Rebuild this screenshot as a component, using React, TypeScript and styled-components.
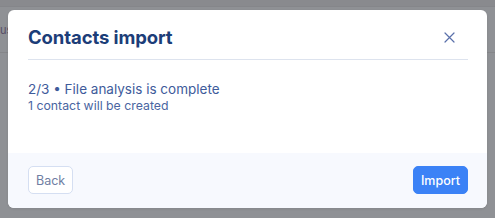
import styled, { createGlobalStyle } from "styled-components";

const GlobalStyle = createGlobalStyle`
  * { box-sizing: border-box; }
  html, body { margin: 0; padding: 0; }
  body {
    font-family: Inter, "Noto Sans", "Liberation Sans", sans-serif;
    background: #8f9195;
    width: 495px;
    height: 218px;
    overflow: hidden;
  }
`;

const Page = styled.div`
  position: relative;
  width: 495px;
  height: 218px;
  background: #8f9195;
`;

const TopStrip = styled.div`
  height: 7px;
  background: #898a8e;
  border-bottom: 1px solid #85868a;
`;

const NavBar = styled.div`
  height: 46px;
  display: flex;
  align-items: center;
  border-bottom: 1px solid #858689;
`;

const NavText = styled.span`
  font-size: 11px;
  color: #564c66;
`;

const Overlay = styled.div`
  position: absolute;
  inset: 0;
  display: flex;
  align-items: center;
  justify-content: center;
`;

const Modal = styled.div`
  width: 479px;
  height: 198px;
  background: #ffffff;
  border-radius: 6px;
  overflow: hidden;
  display: flex;
  flex-direction: column;
  box-shadow: 0 1px 3px rgba(0, 0, 0, 0.08);
`;

const Header = styled.header`
  margin: 0 19px 0 20px;
  height: 50px;
  display: flex;
  align-items: center;
  justify-content: space-between;
  border-bottom: 1px solid #dde3ee;
  padding-top: 5px;
`;

const Title = styled.h2`
  margin: 0;
  font-size: 18.5px;
  font-weight: 700;
  color: #1c3d78;
  letter-spacing: -0.1px;
`;

const CloseButton = styled.button`
  border: none;
  background: none;
  padding: 0;
  width: 20px;
  height: 20px;
  display: flex;
  align-items: center;
  justify-content: center;
  margin-right: 9px;
  margin-top: 1px;
  cursor: pointer;
`;

const Body = styled.div`
  flex: 1;
  padding: 21px 20px 0;
`;

const Step = styled.div`
  font-size: 13.5px;
  color: #3e5b9b;
  line-height: 17px;
`;

const Note = styled.div`
  font-size: 12.3px;
  color: #4a65a1;
  line-height: 15px;
`;

const Footer = styled.footer`
  height: 55px;
  background: #f7f9fe;
  display: flex;
  align-items: center;
  justify-content: space-between;
  padding: 0 19px 1px 20px;
`;

const Button = styled.button<{ $primary?: boolean }>`
  height: 28px;
  padding: 0 7px;
  border-radius: 5px;
  font-family: inherit;
  font-size: 12.5px;
  font-weight: ${(p) => (p.$primary ? 500 : 400)};
  color: ${(p) => (p.$primary ? "#ffffff" : "#6f7ea3")};
  background: ${(p) => (p.$primary ? "#3b82f6" : "#ffffff")};
  border: 1px solid ${(p) => (p.$primary ? "#3b82f6" : "#d5dff2")};
  cursor: pointer;
`;

function CloseIcon() {
  return (
    <svg width="11" height="11" viewBox="0 0 11 11">
      <path d="M1 1 L10 10 M10 1 L1 10" stroke="#5a70aa" strokeWidth="1.2" strokeLinecap="round" />
    </svg>
  );
}

export default function App() {
  return (
    <Page>
      <GlobalStyle />
      <TopStrip />
      <NavBar>
        <NavText>us</NavText>
      </NavBar>
      <Overlay>
        <Modal>
          <Header>
            <Title>Contacts import</Title>
            <CloseButton aria-label="Close">
              <CloseIcon />
            </CloseButton>
          </Header>
          <Body>
            <Step>2/3 • File analysis is complete</Step>
            <Note>1 contact will be created</Note>
          </Body>
          <Footer>
            <Button>Back</Button>
            <Button $primary>Import</Button>
          </Footer>
        </Modal>
      </Overlay>
    </Page>
  );
}
